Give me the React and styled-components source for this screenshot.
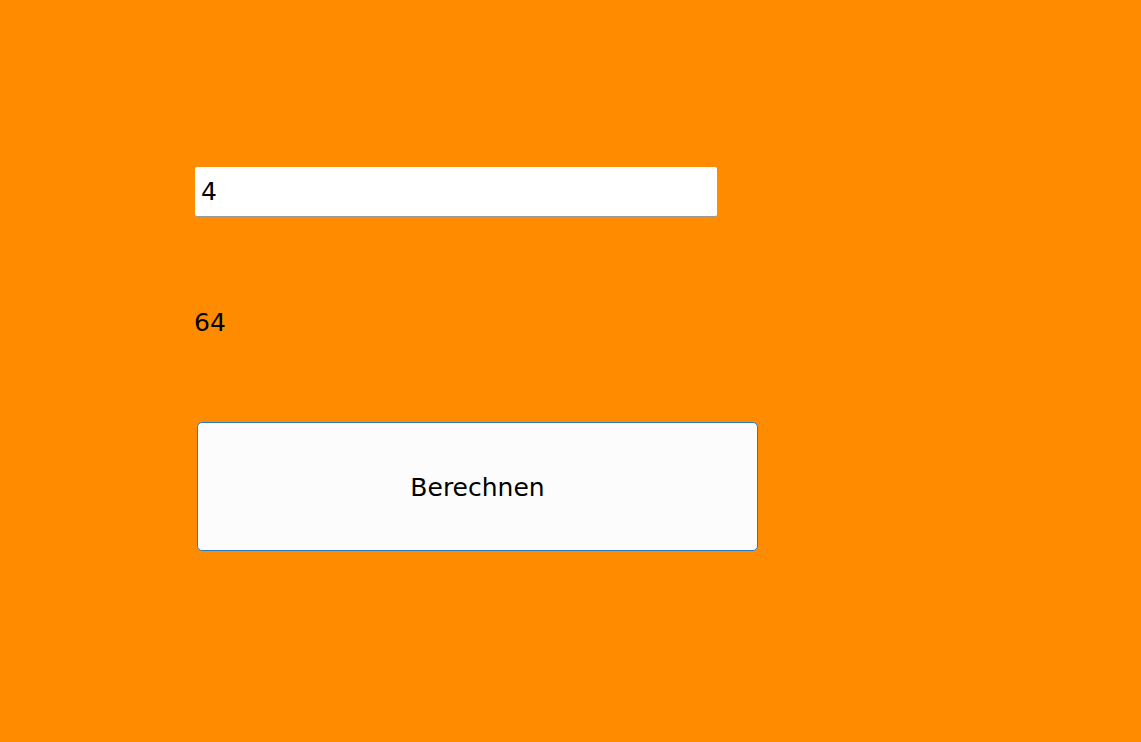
import React, { useState } from "react";
import styled, { createGlobalStyle } from "styled-components";

const GlobalStyle = createGlobalStyle`
  html, body {
    margin: 0;
    padding: 0;
    background: #ff8c00;
  }
  body {
    font-family: "DejaVu Sans", "Comic Sans MS", sans-serif;
  }
`;

const Page = styled.div`
  min-height: 742px;
  background: #ff8c00;
  padding: 167px 0 0 195px;
  box-sizing: border-box;
  display: flex;
  flex-direction: column;
  align-items: flex-start;
`;

const NumberInput = styled.input`
  width: 522px;
  height: 50px;
  box-sizing: border-box;
  border: none;
  border-bottom: 1px solid #9a9a9a;
  border-radius: 2px;
  background: #ffffff;
  padding: 0 6px;
  font-family: inherit;
  font-size: 25px;
  color: #000;
  outline: none;
`;

const Result = styled.div`
  margin-top: 91px;
  margin-left: -1px;
  font-size: 25px;
  line-height: 30px;
  color: #000;
`;

const CalcButton = styled.button`
  margin-top: 84px;
  margin-left: 2px;
  width: 561px;
  height: 129px;
  box-sizing: border-box;
  background: #fcfcfc;
  border: 1px solid #2b7bc4;
  border-radius: 5px;
  padding-top: 2px;
  font-family: inherit;
  font-size: 25px;
  color: #000;
  cursor: pointer;
`;

const App = () => {
  const [value, setValue] = useState("4");
  const [result, setResult] = useState("64");

  const calc = () => {
    const n = parseFloat(value);
    if (!isNaN(n)) setResult(String(n * n * n));
  };

  return (
    <>
      <GlobalStyle />
      <Page>
        <NumberInput value={value} onChange={(e) => setValue(e.target.value)} />
        <Result>{result}</Result>
        <CalcButton onClick={calc}>Berechnen</CalcButton>
      </Page>
    </>
  );
};

export default App;
